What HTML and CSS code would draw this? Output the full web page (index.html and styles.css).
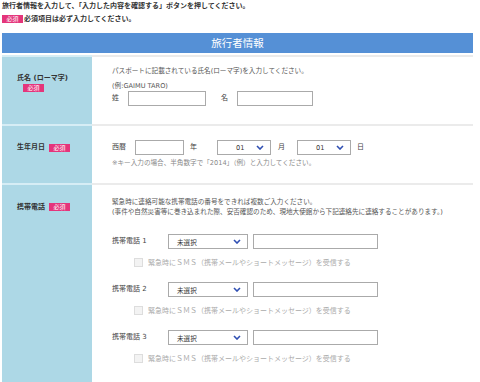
FILE: index.html
```html
<!DOCTYPE html>
<html lang="ja">

<head>
    <meta charset="UTF-8">
    <meta name="viewport" content="width=device-width, initial-scale=1.0">
    <title>旅行者情報</title>
    <link rel="stylesheet" href="styles.css">
</head>

<body>
    <div class="page">
        <p class="lead">旅行者情報を入力して、「入力した内容を確認する」ボタンを押してください。</p>
        <p class="lead"><span class="req">必須</span>必須項目は必ず入力してください。</p>

        <div class="form">
            <h2 class="form-title">旅行者情報</h2>

            <!-- 氏名 -->
            <div class="row">
                <div class="head head-name">
                    <span class="head-label">氏名 (ローマ字)</span>
                    <span class="req req-block">必須</span>
                </div>
                <div class="body body-name">
                    <p class="desc">パスポートに記載されている氏名(ローマ字)を入力してください。</p>
                    <p class="desc desc-example">(例:GAIMU TARO)</p>
                    <div class="line">
                        <span class="field-label gap-9">姓</span>
                        <input type="text" class="text w-last">
                        <span class="field-label gap-9 name-first">名</span>
                        <input type="text" class="text w-first">
                    </div>
                </div>
            </div>

            <!-- 生年月日 -->
            <div class="row">
                <div class="head head-birth">
                    <span class="head-label">生年月日</span>
                    <span class="req">必須</span>
                </div>
                <div class="body body-birth">
                    <div class="line">
                        <span class="field-label gap-9">西暦</span>
                        <input type="text" class="text w-year">
                        <span class="field-label unit unit-year">年</span>
                        <div class="select select-date">
                            <span>01</span>
                            <svg class="chevron" width="8" height="5" viewBox="0 0 8 5"><polyline points="1,1 4,4 7,1" /></svg>
                        </div>
                        <span class="field-label unit unit-month">月</span>
                        <div class="select select-date">
                            <span>01</span>
                            <svg class="chevron" width="8" height="5" viewBox="0 0 8 5"><polyline points="1,1 4,4 7,1" /></svg>
                        </div>
                        <span class="field-label unit">日</span>
                    </div>
                    <p class="note">※キー入力の場合、半角数字で「2014」（例）と入力してください。</p>
                </div>
            </div>

            <!-- 携帯電話 -->
            <div class="row">
                <div class="head head-phone">
                    <span class="head-label">携帯電話</span>
                    <span class="req">必須</span>
                </div>
                <div class="body body-phone">
                    <p class="desc desc-tight">緊急時に連絡可能な携帯電話の番号をできれば複数ご入力ください。</p>
                    <p class="desc desc-tight">(事件や自然災害等に巻き込まれた際、安否確認のため、現地大使館から下記連絡先に連絡することがあります。)</p>

                    <div class="phone">
                        <div class="line">
                            <span class="field-label phone-label">携帯電話 1</span>
                            <div class="select select-phone">
                                <span>未選択</span>
                                <svg class="chevron" width="8" height="5" viewBox="0 0 8 5"><polyline points="1,1 4,4 7,1" /></svg>
                            </div>
                            <input type="text" class="text w-phone">
                        </div>
                        <label class="sms"><span class="check"></span>緊急時にＳＭＳ（携帯メールやショートメッセージ）を受信する</label>
                    </div>

                    <div class="phone">
                        <div class="line">
                            <span class="field-label phone-label">携帯電話 2</span>
                            <div class="select select-phone">
                                <span>未選択</span>
                                <svg class="chevron" width="8" height="5" viewBox="0 0 8 5"><polyline points="1,1 4,4 7,1" /></svg>
                            </div>
                            <input type="text" class="text w-phone">
                        </div>
                        <label class="sms"><span class="check"></span>緊急時にＳＭＳ（携帯メールやショートメッセージ）を受信する</label>
                    </div>

                    <div class="phone">
                        <div class="line">
                            <span class="field-label phone-label">携帯電話 3</span>
                            <div class="select select-phone">
                                <span>未選択</span>
                                <svg class="chevron" width="8" height="5" viewBox="0 0 8 5"><polyline points="1,1 4,4 7,1" /></svg>
                            </div>
                            <input type="text" class="text w-phone">
                        </div>
                        <label class="sms"><span class="check"></span>緊急時にＳＭＳ（携帯メールやショートメッセージ）を受信する</label>
                    </div>
                </div>
            </div>
        </div>
    </div>
</body>

</html>
```

FILE: styles.css
```css
body {
    margin: 0;
    font-family: "DejaVu Sans", "Noto Sans CJK JP", sans-serif;
    color: #333;
    background: white;
}

p {
    margin: 0;
}

.page {
    padding: 0 7px 0 2px;
}

.lead {
    font-size: 7px;
    font-weight: bold;
    line-height: 13px;
}

.req {
    display: inline-block;
    width: 21px;
    height: 8px;
    line-height: 8px;
    background: #e4357b;
    color: white;
    font-size: 6px;
    font-weight: normal;
    text-align: center;
    vertical-align: middle;
    margin-right: 1px;
}

.form {
    width: 471px;
    margin-top: 7px;
}

.form-title {
    margin: 0 0 2px;
    height: 20px;
    line-height: 20px;
    background: #5590d6;
    color: white;
    font-size: 10.5px;
    font-weight: normal;
    text-align: center;
}

.row {
    display: grid;
    grid-template-columns: 90px 1fr;
}

.head {
    background: #add8e6;
    border-top: 2px solid #d6edf5;
    padding-left: 15px;
}

.head-label {
    font-size: 7px;
    font-weight: bold;
    line-height: 10px;
}

.head-name {
    padding-top: 16px;
}

.head-name .head-label {
    display: block;
}

.req-block {
    display: block;
    margin: 1px 0 0 6px;
}

.head-birth,
.head-phone {
    display: flex;
    gap: 4px;
    align-items: flex-start;
}

.head-birth {
    padding-top: 14px;
}

.head-birth .head-label {
    line-height: 15px;
}

.head-birth .req {
    margin-top: 4px;
}

.head-phone {
    padding-top: 17px;
}

.head-phone .req {
    margin-top: 1px;
}

.body {
    border-top: 2px solid #ebebeb;
    padding-left: 20px;
}

.body-name {
    padding-top: 9px;
    padding-bottom: 18px;
}

.body-birth {
    padding-top: 14px;
    padding-bottom: 15px;
}

.body-phone {
    padding-top: 13px;
    padding-bottom: 30px;
}

.desc {
    font-size: 6.6px;
    line-height: 10px;
    color: #555;
}

.desc-example {
    margin-top: 4.5px;
    margin-bottom: 0.5px;
}

.desc-tight {
    line-height: 9.5px;
}

.note {
    margin-top: 3px;
    font-size: 6.6px;
    line-height: 10px;
    color: #888;
}

.line {
    display: flex;
    align-items: center;
    height: 15px;
}

.field-label {
    font-size: 7px;
    line-height: 15px;
    color: #444;
}

.gap-9 {
    margin-right: 9px;
}

.name-first {
    margin-left: 15px;
}

.text {
    box-sizing: border-box;
    height: 15px;
    margin: 0;
    padding: 0;
    border: 1px solid #aaa;
    background: white;
}

.w-last {
    width: 78px;
}

.w-first {
    width: 76px;
}

.w-year {
    width: 49px;
}

.w-phone {
    width: 125px;
    margin-left: 5px;
}

.unit {
    margin-left: 6px;
}

.unit-year {
    margin-right: 20px;
}

.unit-month {
    margin-left: 7px;
    margin-right: 12px;
}

.select {
    box-sizing: border-box;
    height: 15px;
    border: 1px solid #aaa;
    display: flex;
    align-items: center;
    justify-content: space-between;
    font-size: 6.6px;
    color: #333;
    padding-right: 6px;
}

.select-date {
    width: 54px;
    padding-left: 18px;
}

.select-phone {
    width: 80px;
    padding-left: 8px;
}

.chevron polyline {
    fill: none;
    stroke: #2f4fb3;
    stroke-width: 1.6;
}

.phone {
    margin-top: 17px;
}

.phone + .phone {
    margin-top: 15px;
}

.phone-label {
    width: 56px;
}

.sms {
    display: flex;
    align-items: center;
    height: 10px;
    margin-top: 8px;
    padding-left: 22px;
    font-size: 7px;
    color: #aaa;
}

.check {
    box-sizing: border-box;
    width: 9px;
    height: 9px;
    border: 1px solid #ddd;
    background: #f3f3f3;
    margin-right: 5px;
}
```
